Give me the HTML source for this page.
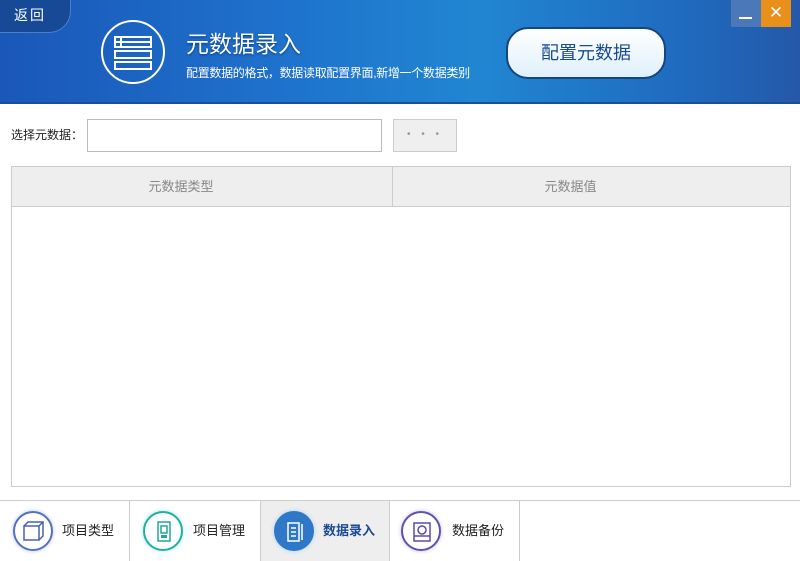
<!DOCTYPE html>
<html><head><meta charset="utf-8"><style>
*{margin:0;padding:0;box-sizing:border-box}
body{width:800px;height:560px;overflow:hidden;background:#fff;font-family:"Liberation Sans","Noto Sans CJK SC",sans-serif;position:relative}
.hdr{position:absolute;left:0;top:0;width:800px;height:104px;background:linear-gradient(90deg,#1a57b8 0%,#1e72cc 35%,#2186d2 60%,#1f6bbf 85%,#2558a8 100%);border-bottom:2px solid #174e9e}
.back{position:absolute;left:-20px;top:-10px;width:91px;height:43px;background:#164a96;border:1px solid #4d7fc4;border-radius:0 0 22px 0;color:#fff;font-size:14px;padding:14px 0 0 33px;letter-spacing:2px}
.circ{position:absolute;left:101px;top:20px;width:64px;height:64px;border:2px solid #fff;border-radius:50%}
.t1{position:absolute;left:186px;top:25px;color:#fff;font-size:23px;text-shadow:0 1px 2px #0b3a80}
.t2{position:absolute;left:186px;top:64px;color:#fff;font-size:12px;letter-spacing:-0.3px}
.btn{position:absolute;left:506px;top:27px;width:160px;height:52px;border-radius:22px;background:linear-gradient(#fff,#dff0fb);border:2px solid #16447f;color:#1b4a92;font-size:18px;text-align:center;line-height:48px}
.min{position:absolute;left:731px;top:0;width:30px;height:27px;background:#4a78b8}
.min:after{content:"";position:absolute;left:8px;top:17px;width:13px;height:2px;background:#fff}
.cls{position:absolute;left:761px;top:0;width:30px;height:27px;background:#e8901a;color:#fff;font-size:17px;text-align:center;line-height:26px}
.lbl{position:absolute;left:11px;top:126px;font-size:12px;color:#222}
.inp{position:absolute;left:87px;top:119px;width:295px;height:33px;border:1px solid #bbb}
.dots{position:absolute;left:393px;top:119px;width:64px;height:33px;border:1px solid #ccc;background:#efefef;color:#999;text-align:center;font-size:10px;line-height:30px;letter-spacing:4px}
.tbl{position:absolute;left:11px;top:166px;width:780px;height:321px;border:1px solid #ccc}
.th{position:absolute;top:0;height:40px;background:#eee;border-bottom:1px solid #ccc;color:#888;font-size:13px;text-align:center;line-height:40px;padding-right:42px}
.foot{position:absolute;left:0;top:500px;width:800px;height:60px;border-top:1px solid #ccc}
.tab{position:absolute;top:0;height:60px;border-right:1px solid #ccc;font-size:13px;color:#222}
.tab .ic{position:absolute;left:13px;top:10px;width:40px;height:40px;border-radius:50%;border:2px solid #5570c0;box-shadow:0 0 4px #b8c8f0}
.tab span{position:absolute;top:19px}
</style></head><body>
<div class="hdr">
<div class="back">返回</div>
<div class="circ"><svg width="64" height="64" viewBox="0 0 64 64" style="position:absolute;left:-2px;top:-2px"><g fill="none" stroke="#fff" stroke-width="2"><rect x="14" y="17" width="36" height="10"/><rect x="14" y="31" width="36" height="7"/><rect x="14" y="42" width="36" height="7"/><line x1="20" y1="17" x2="20" y2="27"/><line x1="14" y1="22" x2="50" y2="22"/></g></svg></div>
<div class="t1">元数据录入</div>
<div class="t2">配置数据的格式，数据读取配置界面,新增一个数据类别</div>
<div class="btn">配置元数据</div>
<div class="min"></div><div class="cls">✕</div>
</div>
<div class="lbl">选择元数据：</div>
<div class="inp"></div>
<div class="dots">• • •</div>
<div class="tbl">
<div class="th" style="left:0;width:381px;border-right:1px solid #ccc">元数据类型</div>
<div class="th" style="left:381px;width:397px">元数据值</div>
</div>
<div class="foot">
<div class="tab" style="left:0;width:130px"><div class="ic"></div><svg style="position:absolute;left:21px;top:18px" width="26" height="26"><g fill="none" stroke="#4a60b0" stroke-width="1.5"><rect x="3" y="7" width="15" height="14"/><path d="M3 7l4-4h15v14l-4 4M18 7l4-4"/></g></svg><span style="left:62px">项目类型</span></div>
<div class="tab" style="left:130px;width:131px"><div class="ic" style="border-color:#20b0a0;box-shadow:0 0 4px #a0e8e0"></div><svg style="position:absolute;left:21px;top:18px" width="26" height="26"><g fill="none" stroke="#20a898" stroke-width="1.5"><rect x="7" y="3" width="12" height="19"/><rect x="10" y="7" width="6" height="7"/></g><rect x="10" y="16" width="6" height="3" fill="#20a898"/></svg><span style="left:63px">项目管理</span></div>
<div class="tab" style="left:261px;width:129px;background:#eee"><div class="ic" style="background:#2f78c8;border-color:#2f78c8;box-shadow:0 0 5px #a8d0f8"></div><svg style="position:absolute;left:21px;top:18px" width="26" height="26"><g fill="none" stroke="#fff" stroke-width="1.5"><rect x="6" y="4" width="11" height="18"/><path d="M9 9h5M9 13h5M9 17h5M20 5v16"/></g></svg><span style="left:62px;color:#1b4a92;font-weight:bold">数据录入</span></div>
<div class="tab" style="left:390px;width:130px"><div class="ic" style="left:11px;border-color:#6050b0;box-shadow:0 0 4px #c8c0f0"></div><svg style="position:absolute;left:19px;top:18px" width="26" height="26"><g fill="none" stroke="#5a4aa8" stroke-width="1.5"><rect x="5" y="4" width="16" height="18"/><circle cx="13" cy="11" r="4"/><path d="M5 17h16"/></g></svg><span style="left:62px">数据备份</span></div>
</div>
</body></html>
